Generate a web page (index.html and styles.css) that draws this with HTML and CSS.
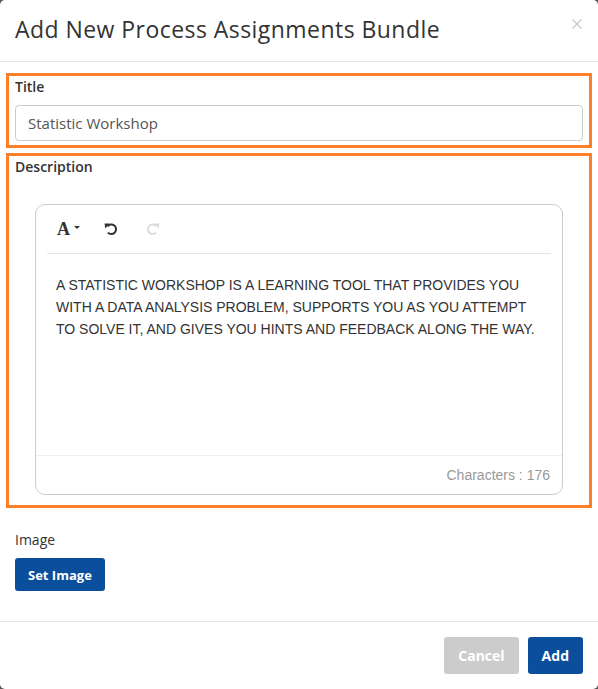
FILE: index.html
```html
<!DOCTYPE html>
<html lang="en">
<head>
  <meta charset="UTF-8">
  <title>Add New Process Assignments Bundle</title>
  <link rel="stylesheet" href="styles.css">
</head>
<body>

<div class="modal">
  <div class="modal-header">
    <h3>Add New Process Assignments Bundle</h3>
    <span class="close">
      <svg width="10" height="10" viewBox="0 0 10 10"><path d="M0.5 0.5 L9.5 9.5 M9.5 0.5 L0.5 9.5" stroke="#c8c8c8" stroke-width="1.2"/></svg>
    </span>
  </div>

  <div class="modal-body">
    <div class="field highlight">
      <label>Title</label>
      <input type="text" class="input" value="Statistic Workshop">
    </div>

    <div class="field highlight desc-field">
      <label>Description</label>
      <div class="editor">
        <div class="toolbar">
          <span class="tool font-tool">A<span class="caret"></span></span>
          <span class="tool undo">
            <svg width="14" height="14" viewBox="0 0 14 14"><path d="M3.4 4.4 A4.8 4.8 0 1 1 3.8 10.6" fill="none" stroke="#333" stroke-width="2"/><path d="M0.6 1.4 L5.8 1.4 L1.2 6.4 Z" fill="#333"/></svg>
          </span>
          <span class="tool redo">
            <svg width="14" height="14" viewBox="0 0 14 14"><path d="M10.6 4.4 A4.8 4.8 0 1 0 10.2 10.6" fill="none" stroke="#ddd" stroke-width="2"/><path d="M13.4 1.4 L8.2 1.4 L12.8 6.4 Z" fill="#ddd"/></svg>
          </span>
        </div>
        <div class="editor-text">
          A STATISTIC WORKSHOP IS A LEARNING TOOL THAT PROVIDES YOU WITH A DATA ANALYSIS PROBLEM, SUPPORTS YOU AS YOU ATTEMPT TO SOLVE IT, AND GIVES YOU HINTS AND FEEDBACK ALONG THE WAY.
        </div>
        <div class="editor-footer">Characters : 176</div>
      </div>
    </div>

    <div class="field image-field">
      <label>Image</label>
      <button class="btn btn-primary">Set Image</button>
    </div>
  </div>

  <div class="modal-footer">
    <button class="btn btn-default">Cancel</button>
    <button class="btn btn-primary">Add</button>
  </div>
</div>

</body>
</html>
```

FILE: styles.css
```css
html, body {
  margin: 0;
  padding: 0;
  height: 100%;
}
body {
  background: #555;
  font-family: 'Open Sans', 'Helvetica Neue', sans-serif;
  color: #333;
}
.modal {
  background: #fff;
  height: 689px;
  border-radius: 5px;
  box-sizing: border-box;
}
.modal-header {
  height: 62px;
  border-bottom: 1px solid #e5e5e5;
  display: flex;
  align-items: center;
  justify-content: space-between;
  padding: 0 15px;
  box-sizing: border-box;
}
.modal-header h3 {
  margin: 0 0 3px;
  font-size: 23px;
  font-weight: 400;
  color: #333;
  letter-spacing: 0.45px;
}
.close {
  align-self: flex-start;
  margin-top: 19px;
  margin-right: 1px;
  line-height: 0;
}
.modal-body {
  padding: 11px 6px 0;
}
.field label {
  display: block;
  font-size: 14px;
  line-height: 20px;
  font-weight: 600;
  color: #333;
  margin-bottom: 8px;
}
.highlight {
  border: 3px solid #fd7f28;
  padding: 1px 6px 4px 6px;
}
.input {
  display: block;
  width: 100%;
  box-sizing: border-box;
  height: 36px;
  border: 1px solid #ccc;
  border-radius: 4px;
  padding: 0 12px;
  font-family: 'Open Sans', sans-serif;
  font-size: 15px;
  color: #555;
}
.desc-field {
  margin-top: 5px;
  padding-bottom: 10px;
}
.desc-field label {
  margin-bottom: 27px;
}
.editor {
  margin: 0 20px;
  border: 1px solid #ccc;
  border-radius: 10px;
  height: 291px;
  box-sizing: border-box;
  display: flex;
  flex-direction: column;
}
.toolbar {
  display: flex;
  align-items: center;
  margin: 0 11px;
  height: 49px;
  flex-shrink: 0;
  padding-left: 10px;
  border-bottom: 1px solid #e5e5e5;
  box-sizing: border-box;
}
.tool {
  display: flex;
  align-items: center;
}
.font-tool {
  font-family: 'Liberation Serif', serif;
  font-weight: 700;
  font-size: 18px;
  color: #333;
}
.caret {
  display: inline-block;
  border-left: 3.5px solid transparent;
  border-right: 3.5px solid transparent;
  border-top: 3.5px solid #333;
  margin-left: 4px;
  margin-bottom: 4px;
}
.undo {
  margin-left: 24px;
}
.redo {
  margin-left: 28px;
}
.editor-text {
  flex: 1;
  padding: 20px 20px 0 20px;
  font-family: 'Liberation Sans', Arial, sans-serif;
  font-size: 14px;
  line-height: 22px;
  color: #333;
}
.editor-footer {
  height: 39px;
  border-top: 1px solid #eee;
  box-sizing: border-box;
  text-align: right;
  padding-right: 12px;
  line-height: 38px;
  font-family: 'Liberation Sans', Arial, sans-serif;
  font-size: 14px;
  color: #999;
}
.image-field {
  padding: 22px 9px 0 9px;
}
.image-field label {
  font-weight: 400;
  margin-bottom: 8px;
}
.btn {
  border: none;
  border-radius: 3px;
  font-family: 'Open Sans', sans-serif;
  font-weight: 700;
  font-size: 13px;
  color: #fff;
  padding: 0 13px;
  height: 33px;
  cursor: pointer;
}
.btn-primary {
  background: #0b4f9c;
}
.btn-default {
  background: #ccc;
}
.modal-footer {
  margin-top: 30px;
  border-top: 1px solid #e5e5e5;
  display: flex;
  justify-content: flex-end;
  gap: 9px;
  padding: 15px 15px 0;
}
.modal-footer .btn {
  height: 37px;
  font-size: 14px;
  padding: 0 14px;
}
```
